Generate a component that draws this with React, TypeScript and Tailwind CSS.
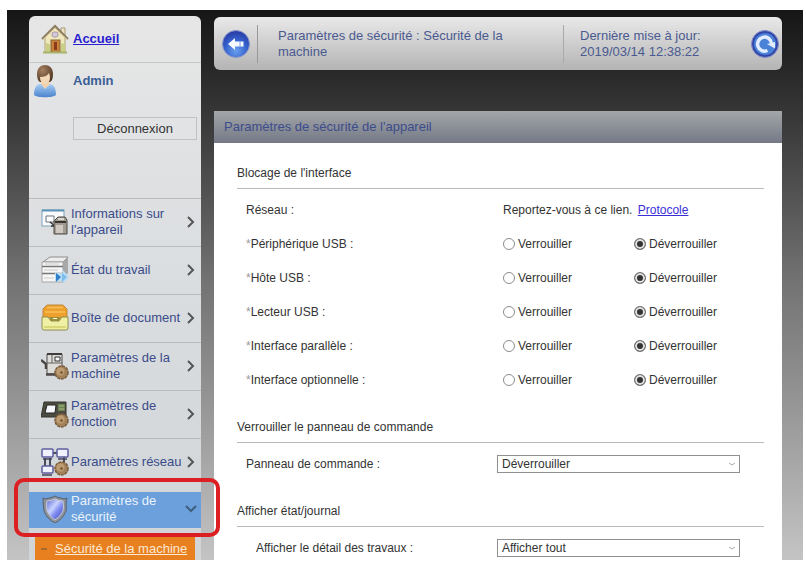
import type { ReactNode } from "react";

function HomeIcon() {
  return (
    <svg width="28" height="30" viewBox="0 0 28 30" aria-hidden="true">
      <path d="M20 4h4v9h-4z" fill="#efe6c4" stroke="#a59a78" />
      <path d="M4 13 L14 4 L24 13 V28 H4z" fill="#efe8bd" stroke="#b0a473" />
      <path d="M1 15 L14 2 L27 15" fill="none" stroke="#8c7c60" strokeWidth="2" />
      <path d="M2 15.500 L14 4 L26 15.500" fill="none" stroke="#e2cfa4" />
      <rect x="11" y="8" width="6" height="5" rx="2" fill="#d5c7dc" stroke="#9c8ca0" strokeWidth=".8" />
      <rect x="10" y="16" width="9" height="12" fill="#c9813a" stroke="#85653a" />
      <rect x="13" y="18" width="3" height="8" fill="#8b3c1d" />
      <path d="M5 20c2-3 3 2 4 0v8H5zM20 20c2-2 3 1 4 0v8h-4z" fill="#c9cf85" />
      <path d="M2 28.500h24" stroke="#a9b36a" strokeWidth="2" />
    </svg>
  );
}

function UserIcon() {
  return (
    <svg width="24" height="34" viewBox="0 0 24 34" aria-hidden="true">
      <defs>
        <linearGradient id="shirt" x1="0" y1="0" x2="0" y2="1">
          <stop offset="0" stopColor="#a9cdf2" />
          <stop offset="1" stopColor="#4a83ce" />
        </linearGradient>
        <radialGradient id="hair" cx=".35" cy=".3" r=".8">
          <stop offset="0" stopColor="#a58060" />
          <stop offset="1" stopColor="#4d3420" />
        </radialGradient>
      </defs>
      <path d="M1 31c0-8 3-11 7-11h8c4 0 7 3 7 11-3 3-19 3-22 0z" fill="url(#shirt)" />
      <path d="M8 20l4 5 5-5v-3H8z" fill="#f1d3ae" />
      <path d="M4 10C4 4 8 1 12 1s8 3 8 9c0 4-1 7-3 8H7c-2-1-3-4-3-8z" fill="url(#hair)" />
      <path d="M7 13c4 0 7-1 9-4 2 5 1 11-4 11-3 0-5-3-5-7z" fill="#f3d8b7" />
    </svg>
  );
}

function Gear() {
  return (
    <g>
      <circle cx="20.500" cy="20.500" r="6.500" fill="#a1805a" stroke="#7a5c3c" strokeWidth="1.500" strokeDasharray="3 .8" />
      <circle cx="19.500" cy="19.500" r="4" fill="#bd9c72" />
      <circle cx="20.500" cy="20.500" r="1.500" fill="#805f3c" />
    </g>
  );
}

const ICON = { width: 28, height: 28, viewBox: "0 0 28 28", "aria-hidden": true, className: "shrink-0" };

function DeviceInfoIcon() {
  return (
    <svg {...ICON}>
      <rect x="1" y="2" width="22" height="16" fill="#f8fafc" stroke="#7fa3bd" />
      <path d="M1 2.500h22" stroke="#5e93b8" strokeWidth="2" />
      <path d="M5 8h8v6H5z" fill="#fff" stroke="#6d737e" />
      <path d="M9 14l5 4M14 14v4h-4" fill="none" stroke="#333" strokeWidth="1.500" />
      <path d="M15 11l2-2h7l2 3v14H13V13z" fill="#a19b92" stroke="#4d4945" />
      <path d="M14 14h11" stroke="#37332f" strokeWidth="2" />
      <path d="M15 17h7v8h-7z" fill="#cfcac1" />
      <path d="M17 11h6" stroke="#ddd8cf" strokeWidth="2" />
    </svg>
  );
}

function JobStatusIcon() {
  return (
    <svg {...ICON}>
      <path d="M2 6l7-5h18l-5 5z" fill="#ececec" stroke="#8e8e8e" />
      <path d="M22 6l5-5v16l-5 6z" fill="#a8a8a8" />
      <path d="M1 6h21v20H1z" fill="#f6f6f6" stroke="#a5a5a5" />
      <path d="M1 10.500h21M1 17.500h21" stroke="#777" strokeWidth="1.500" />
      <path d="M4 8h14M3 14h14M3 22h10" stroke="#cacaca" />
      <path d="M14 17h8v-3l6 7-6 7v-3h-8z" fill="#b9dcf7" />
      <path d="M15 17l5 4-5 5z" fill="#2c7fc8" />
      <path d="M21 17l5 4-5 5z" fill="#7dbbeb" />
    </svg>
  );
}

function DocumentBoxIcon() {
  return (
    <svg {...ICON}>
      <path d="M2 14V5l4-4h16l4 4v9z" fill="#eda02c" stroke="#c1893a" />
      <path d="M6 3.500h16M4 8h20" stroke="#f6c058" strokeWidth="1.500" />
      <path d="M1 13h6l3 4h8l3-4h6v11q0 2-2 2H3q-2 0-2-2z" fill="#f0f0a4" stroke="#8e8c50" />
      <path d="M9 13h10v4H9z" fill="#9a8f3c" />
      <path d="M12 14.500h4" stroke="#fffad0" />
      <path d="M3 23h22" stroke="#d8d878" strokeWidth="2" />
    </svg>
  );
}

function MachineSettingsIcon() {
  return (
    <svg {...ICON}>
      <path d="M0 8l5 4v5" fill="none" stroke="#4a4745" strokeWidth="2.500" />
      <path d="M6 2h15v20H6z" fill="#dedcd9" stroke="#4c4a47" />
      <path d="M6 2h15" stroke="#3f3d3b" strokeWidth="2" />
      <path d="M14 5h5v4h-5z" fill="#f8f8f8" stroke="#333" />
      <path d="M6 11h15M11 3v8" stroke="#62605d" />
      <path d="M5 22.500h11" stroke="#4d4a47" strokeWidth="2.500" />
      <Gear />
    </svg>
  );
}

function FunctionSettingsIcon() {
  return (
    <svg {...ICON}>
      <path d="M3 2h22v15H0z" fill="#4c4b42" stroke="#34352f" />
      <path d="M6 5h9l-1 8H4z" fill="#f5f7fc" stroke="#24251f" />
      <path d="M17 4h7v7h-7z" fill="#6c8250" />
      <path d="M18 6h5M18 9h5" stroke="#a9b884" />
      <Gear />
    </svg>
  );
}

function NetworkSettingsIcon() {
  return (
    <svg {...ICON}>
      <path d="M4 10v8M9 10v8M11 5h6M23 9v6" stroke="#4b4b5e" strokeWidth="2" />
      <rect x="1" y="1" width="11" height="8" rx="1" fill="#f0f0ff" stroke="#5e5e9e" strokeWidth="1.500" />
      <rect x="16" y="1" width="11" height="8" rx="1" fill="#f0f0ff" stroke="#5e5e9e" strokeWidth="1.500" />
      <rect x="1" y="18" width="11" height="7" rx="1" fill="#f0f0ff" stroke="#5e5e9e" strokeWidth="1.500" />
      <path d="M1 27h10M2 11h9M17 11h9" stroke="#44445a" strokeWidth="1.500" />
      <Gear />
    </svg>
  );
}

function ShieldIcon() {
  return (
    <svg {...ICON}>
      <defs>
        <linearGradient id="shield" x1="0" y1="0" x2="1" y2="1">
          <stop offset="0" stopColor="#5c66d8" />
          <stop offset=".4" stopColor="#c9d4ff" />
          <stop offset=".6" stopColor="#7f8cf0" />
          <stop offset="1" stopColor="#3d46b8" />
        </linearGradient>
      </defs>
      <path d="M2 3q3 2 6 0 3 0 6-2 3 2 6 2 3 2 6 0c-2 4 0 8-1 13q-3 8-11 12Q6 24 3 16 2 9 2 3z" fill="#8e939b" stroke="#59616f" />
      <path d="M6 6q4 0 8-2 4 2 8 2 1 5 0 10-3 6-8 9-5-3-8-9-1-5 0-10z" fill="url(#shield)" stroke="#c2c8d4" />
    </svg>
  );
}

function Chevron({ open = false }: { open?: boolean }) {
  return (
    <svg
      width="12"
      height="12"
      viewBox="0 0 12 12"
      aria-hidden="true"
      className={open ? "ml-auto shrink-0 rotate-90" : "ml-auto shrink-0"}
    >
      <path d="M3 1l5 5-5 5" fill="none" stroke={open ? "#3f5f7c" : "#555"} strokeWidth="2" />
    </svg>
  );
}

function BackIcon() {
  return (
    <svg width="30" height="30" viewBox="0 0 30 30" aria-hidden="true">
      <defs>
        <radialGradient id="ball" cx=".5" cy=".75" r=".7">
          <stop offset="0" stopColor="#6aa0ee" />
          <stop offset=".6" stopColor="#3560cc" />
          <stop offset="1" stopColor="#2a3da8" />
        </radialGradient>
      </defs>
      <circle cx="15" cy="15" r="13.500" fill="url(#ball)" stroke="#8b98cc" />
      <path d="M7 15l7-6v3.500h8.500v5H14V21z" fill="#f5f9ff" />
      <path d="M19 12v6" stroke="#7d9de0" />
    </svg>
  );
}

function RefreshIcon() {
  return (
    <svg width="30" height="30" viewBox="0 0 30 30" aria-hidden="true">
      <circle cx="15" cy="15" r="13.500" fill="#3446a8" stroke="#8490c8" />
      <circle cx="15" cy="15" r="11" fill="#4a82d8" />
      <path d="M17.500 21.500A7 7 0 1 1 21.500 14" fill="none" stroke="#e3edff" strokeWidth="3.500" />
      <path d="M25 13v6.500l-8-4.500z" fill="#e3edff" />
    </svg>
  );
}

const NAV: { label: string; icon: ReactNode }[] = [
  { label: "Informations sur l'appareil", icon: <DeviceInfoIcon /> },
  { label: "État du travail", icon: <JobStatusIcon /> },
  { label: "Boîte de document", icon: <DocumentBoxIcon /> },
  { label: "Paramètres de la machine", icon: <MachineSettingsIcon /> },
  { label: "Paramètres de fonction", icon: <FunctionSettingsIcon /> },
  { label: "Paramètres réseau", icon: <NetworkSettingsIcon /> },
];

function Sidebar() {
  return (
    <aside className="mt-[6px] w-[172px] shrink-0 rounded-t-md bg-linear-to-b from-[#e6e6e6] via-[#dadde0] to-[#d2d5d7] text-[13px] leading-4">
      <div className="flex h-[47px] items-center gap-1 border-b border-[#c6c8ca] pl-3">
        <HomeIcon />
        <a href="#accueil" className="font-bold text-[#2a20d0] underline">
          Accueil
        </a>
      </div>
      <div className="flex h-[36px] items-center gap-4 pl-1">
        <UserIcon />
        <span className="font-bold text-[#3a5f96]">Admin</span>
      </div>
      <div className="h-[99px] pt-[18px] pr-1 pl-11">
        <button type="button" className="h-[23px] w-full border border-[#bfc1c4] bg-[#e2e3e5] text-[#333]">
          Déconnexion
        </button>
      </div>
      <nav>
        {NAV.map((item) => (
          <button
            key={item.label}
            type="button"
            className="flex h-12 w-full items-center gap-0.5 border-t border-[#b9bcbf] pr-1 pb-0.5 pl-3 text-left text-[#3a4c8a]"
          >
            {item.icon}
            <span className="min-w-0 flex-1">{item.label}</span>
            <Chevron />
          </button>
        ))}
        <div className="relative pt-[6px]">
          <button
            type="button"
            aria-expanded="true"
            className="flex h-9 w-full items-center gap-0.5 bg-[#6ba0dc] pr-1 pb-0.5 pl-3 text-left text-[#eaf2fb]"
          >
            <ShieldIcon />
            <span className="min-w-0 flex-1">Paramètres de sécurité</span>
            <Chevron open />
          </button>
          <div className="pointer-events-none absolute -top-2 -right-[19px] -left-[15px] h-[59px] rounded-[10px] border-4 border-[#dc1f22]" />
        </div>
        <div className="mx-[6px] mt-[9px] flex h-[23px] items-center gap-2 bg-[#e8801f] pl-[6px]">
          <span className="h-[2px] w-[6px] bg-[#a86a2c]" />
          <a href="#securite" className="whitespace-nowrap text-[#fbe9d3] underline">
            Sécurité de la machine
          </a>
        </div>
      </nav>
    </aside>
  );
}

function Section({ title, children }: { title: string; children: ReactNode }) {
  return (
    <section>
      <h2 className="border-b border-[#b9bcbc] pb-[5px] leading-5">{title}</h2>
      <div className="flex flex-col gap-4 pt-3 pl-[9px]">{children}</div>
    </section>
  );
}

function RadioRow({ label, name }: { label: string; name: string }) {
  const radio =
    "size-3 appearance-none rounded-full border border-[#8c8c8c] bg-white checked:border-[#777] checked:bg-[#333] checked:ring-2 checked:ring-[#e2e2e2] checked:ring-inset";
  return (
    <fieldset className="flex h-[18px] items-center">
      <legend className="float-left w-[257px] shrink-0 leading-[18px]">
        <span className="text-[#999]">*</span>
        {label} :
      </legend>
      <label className="flex w-[131px] items-center gap-[3px]">
        <input type="radio" name={name} className={radio} />
        Verrouiller
      </label>
      <label className="flex items-center gap-[3px]">
        <input type="radio" name={name} defaultChecked className={radio} />
        Déverrouiller
      </label>
    </fieldset>
  );
}

function SelectRow({ id, label, options, indent = false }: { id: string; label: string; options: string[]; indent?: boolean }) {
  return (
    <div className="flex h-[18px] items-center">
      <label htmlFor={id} className={indent ? "w-[251px] shrink-0 pl-[10px]" : "w-[251px] shrink-0"}>
        {label} :
      </label>
      <div className="relative w-[243px]">
        <select
          id={id}
          className="block h-[18px] w-full appearance-none border border-[#8f9191] bg-white pl-1 leading-4 text-[#333]"
        >
          {options.map((option) => (
            <option key={option}>{option}</option>
          ))}
        </select>
        <svg width="6" height="4" viewBox="0 0 6 4" aria-hidden="true" className="pointer-events-none absolute top-[7px] right-[5px]">
          <path d="M0 1l3 2 3-2" fill="none" stroke="#aaa" />
        </svg>
      </div>
    </div>
  );
}

const INTERFACES = ["Périphérique USB", "Hôte USB", "Lecteur USB", "Interface parallèle", "Interface optionnelle"];

export default function App() {
  return (
    <div className="bg-white pt-[10px] pr-[3px] pb-[2px] pl-[7px] font-['Liberation_Sans',Arial,sans-serif]">
      <div className="flex gap-[13px] bg-linear-to-b from-[#161616] from-0% via-[#747474] via-50% to-[#c4c4c4] to-100% pr-[21px] pl-[22px]">
        <Sidebar />
        <main className="min-w-0 flex-1 pt-[7px]">
          <header className="flex h-[53px] items-center rounded-md bg-linear-to-b from-[#e9e9e9] to-[#b4b4b4] pr-[2px] pl-[7px] text-[13px] leading-4 text-[#4a5a90]">
            <button type="button" aria-label="Retour">
              <BackIcon />
            </button>
            <div className="ml-[6px] h-[38px] w-px bg-[#999]" />
            <p className="min-w-0 flex-1 pr-14 pl-5">Paramètres de sécurité : Sécurité de la machine</p>
            <div className="h-[38px] w-px bg-[#a9a9a9]" />
            <p className="w-[186px] pl-4">
              Dernière mise à jour:
              <br />
              2019/03/14 12:38:22
            </p>
            <button type="button" aria-label="Actualiser">
              <RefreshIcon />
            </button>
          </header>
          <h1 className="mt-[41px] flex h-8 items-center bg-linear-to-b from-[#a3a7a9] to-[#757986] pl-[10px] text-[13px] text-[#3c4c8c]">
            Paramètres de sécurité de l'appareil
          </h1>
          <div className="flex flex-col gap-7 bg-white pt-5 pr-[18px] pb-[3px] pl-[23px] text-[12px] text-[#333]">
            <Section title="Blocage de l'interface">
              <div className="flex h-[18px] items-center">
                <span className="w-[257px] shrink-0">Réseau :</span>
                <span>
                  Reportez-vous à ce lien.{" "}
                  <a href="#protocole" className="ml-0.5 text-[#3a2fd6] underline">
                    Protocole
                  </a>
                </span>
              </div>
              {INTERFACES.map((label) => (
                <RadioRow key={label} label={label} name={label} />
              ))}
            </Section>
            <Section title="Verrouiller le panneau de commande">
              <SelectRow id="panneau" label="Panneau de commande" options={["Déverrouiller", "Verrouiller"]} />
            </Section>
            <Section title="Afficher état/journal">
              <SelectRow id="travaux" label="Afficher le détail des travaux" options={["Afficher tout", "Mes travaux uniquement"]} indent />
            </Section>
          </div>
        </main>
      </div>
    </div>
  );
}
